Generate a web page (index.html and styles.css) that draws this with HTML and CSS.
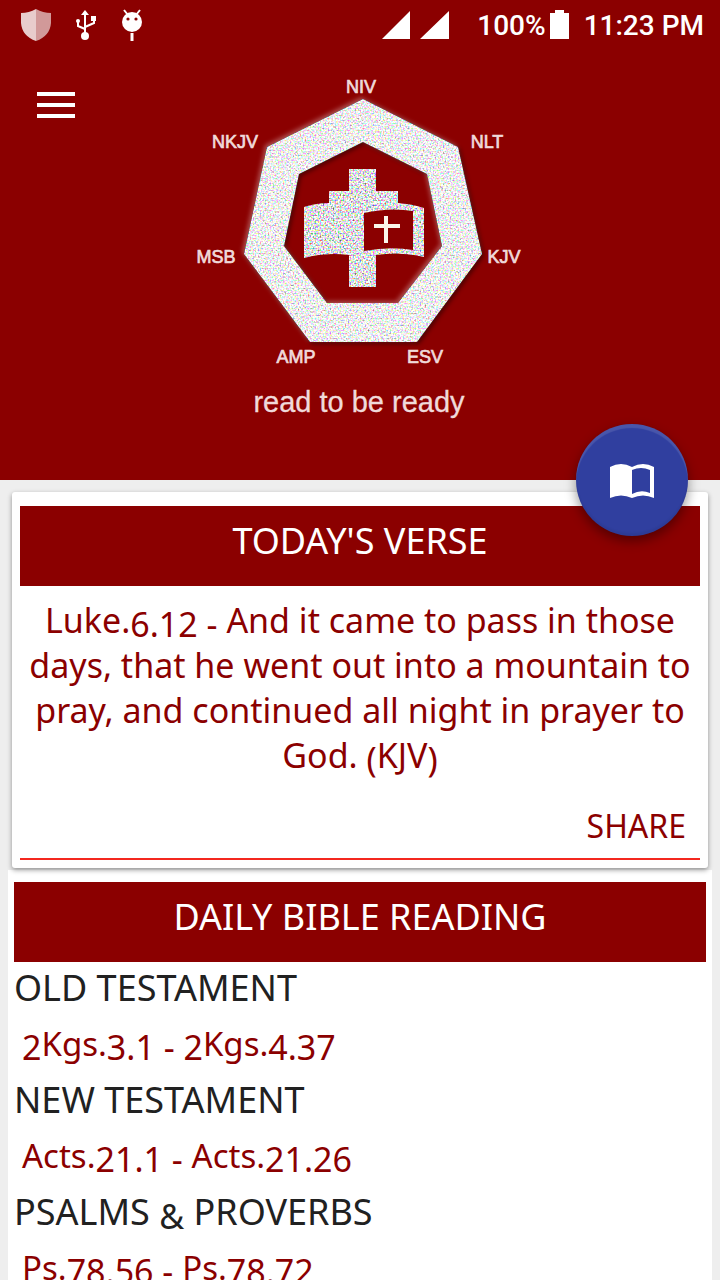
FILE: index.html
```html
<!DOCTYPE html>
<html lang="en">
<head>
  <meta charset="UTF-8">
  <title>Read to be Ready</title>
  <meta name="viewport" content="width=device-width, initial-scale=1.0">
  <link rel="stylesheet" href="styles.css">
</head>
<body>
<div class="screen">

  <header>
    <div class="status">
      <div class="status-left">
        <svg width="30" height="32" viewBox="0 0 30 32">
          <path d="M15 0Q8 4 0 4V14Q1 27 15 32Z" fill="#e8cccc"/>
          <path d="M15 0Q22 4 30 4V14Q29 27 15 32Z" fill="#d19999"/>
        </svg>
        <svg width="20" height="32" viewBox="0 0 20 32" fill="none" stroke="#fff" stroke-width="2">
          <path d="M9 4V26M9 20L2 17V11M9 18L18 14V9"/>
          <path d="M9 1L13 6H5Z" fill="#fff" stroke="none"/>
          <circle cx="9" cy="27" r="4" fill="#fff" stroke="none"/>
          <circle cx="2" cy="12" r="2" fill="#fff" stroke="none"/>
          <path d="M15 7H20V12H15Z" fill="#fff" stroke="none"/>
        </svg>
        <svg width="22" height="32" viewBox="0 0 22 32">
          <path d="M3 1L7 6M19 1L15 6" stroke="#fff" stroke-width="2"/>
          <path d="M11 24V32" stroke="#fff" stroke-width="3"/>
          <circle cx="11" cy="13" r="10" fill="#fff"/>
          <circle cx="7" cy="10" r="1.6" fill="#8b0000"/>
          <circle cx="15" cy="10" r="1.6" fill="#8b0000"/>
        </svg>
      </div>
      <div class="status-right">
        <svg width="68" height="30" viewBox="0 0 68 30" fill="#fff">
          <path d="M0 29H28V1ZM38 29H67V1Z"/>
        </svg>
        <span class="battery">100%
          <svg width="19" height="30" viewBox="0 0 19 30" fill="#fff">
            <path d="M5 0H14V3H19V29H0V3H5Z"/>
          </svg>
        </span>
        <span>11:23 PM</span>
      </div>
    </div>

    <div class="hero">
      <button class="menu" aria-label="Menu"><span></span><span></span><span></span></button>
      <svg class="logo" width="340" height="350" viewBox="190 70 340 350" role="img" aria-label="Read to be ready">
        <defs>
          <filter id="grain" x="-10%" y="-10%" width="120%" height="120%" color-interpolation-filters="sRGB">
            <feTurbulence type="fractalNoise" baseFrequency="0.6" numOctaves="1" seed="4" result="noise"/>
            <feColorMatrix in="noise" type="matrix" values="1.6 0 0 0 0.16  0 1.6 0 0 0.16  0 0 1.6 0 0.17  0 0 0 0 1" result="pastel"/>
            <feComposite in="pastel" in2="SourceAlpha" operator="in" result="body"/>
            <feDropShadow in="SourceAlpha" dx="2" dy="2" stdDeviation="2" flood-color="#000" flood-opacity="0.45" result="dark"/>
            <feDropShadow in="SourceAlpha" dx="-2" dy="-2" stdDeviation="2" flood-color="#fff" flood-opacity="0.3" result="light"/>
            <feMerge>
              <feMergeNode in="dark"/>
              <feMergeNode in="light"/>
              <feMergeNode in="body"/>
            </feMerge>
          </filter>
          <filter id="grain-flat" color-interpolation-filters="sRGB">
            <feTurbulence type="fractalNoise" baseFrequency="0.6" numOctaves="1" seed="9" result="noise"/>
            <feColorMatrix in="noise" type="matrix" values="2.2 0 0 0 -0.2  0 2.2 0 0 -0.2  0 0 2.2 0 -0.18  0 0 0 0 1" result="pastel"/>
            <feComposite in="pastel" in2="SourceAlpha" operator="in"/>
          </filter>
        </defs>
        <!-- ring -->
        <path filter="url(#grain)" fill="#fff" fill-rule="evenodd" d="M363 99L458 147L482 254L417 342H310L244 254L267 147ZM363 142L299 174L284 246L327 303H398L442 246L427 174Z"/>
        <!-- cross and open book -->
        <path filter="url(#grain-flat)" fill="#fff" fill-rule="evenodd" d="M349 169H376V191H398V203Q412 204 424 208V257Q400 251 376 255V287H349V255Q326 252 304 258V207Q316 203 329 203V191H349ZM364 213V251Q390 246 413 250V211Q390 207 364 213Z"/>
        <path fill="#fbf6ea" d="M384 216H388V224H400V228H388V243H384V228H374V224H384Z"/>
        <g class="labels">
          <text x="361" y="93">NIV</text>
          <text x="235" y="148">NKJV</text>
          <text x="487" y="148">NLT</text>
          <text x="216" y="263">MSB</text>
          <text x="504" y="263">KJV</text>
          <text x="296" y="363">AMP</text>
          <text x="425" y="363">ESV</text>
        </g>
        <text class="slogan" x="359" y="412">read to be ready</text>
      </svg>
    </div>

    <button class="fab" aria-label="Open bible">
      <svg width="46" height="36" viewBox="0 0 46 36">
        <path fill="#fff" fill-rule="evenodd" d="M1 5Q12 -1 23 5Q34 -1 45 5V36Q34 31 23 36Q12 31 1 36ZM23 8V32Q32 27 41 31V8Q32 4 23 8Z"/>
      </svg>
    </button>
  </header>

  <main>
    <section class="card">
      <h2>TODAY'S VERSE</h2>
      <p class="verse">Luke.<span class="num">6.12 -</span> And it came to pass in those days, that he went out into a mountain to pray, and continued all night in prayer to God. <span class="num">(</span>KJV<span class="num">)</span></p>
      <button class="share">SHARE</button>
    </section>

    <section class="reading">
      <h2>DAILY BIBLE READING</h2>
      <h3>OLD TESTAMENT</h3>
      <a href="#"><span class="num">2</span>Kgs.<span class="num">3.1 - 2</span>Kgs.<span class="num">4.37</span></a>
      <h3>NEW TESTAMENT</h3>
      <a href="#">Acts.<span class="num">21.1 - </span>Acts.<span class="num">21.26</span></a>
      <h3>PSALMS <span class="num">&amp;</span> PROVERBS</h3>
      <a href="#">Ps.<span class="num">78.56 - </span>Ps.<span class="num">78.72</span></a>
    </section>
  </main>

</div>
</body>
</html>
```
FILE: styles.css
```css
* {
  box-sizing: border-box;
}
body {
  margin: 0;
  font-family: 'Noto Sans', sans-serif;
  background: #eee;
  color: #212121;
}
.screen {
  height: 100vh;
  overflow: hidden;
}
button {
  border: none;
  padding: 0;
  background: transparent;
  font-family: inherit;
  cursor: pointer;
}
header {
  position: relative;
  z-index: 1;
  background: #8b0000;
  padding-bottom: 60px;
}
.status {
  display: flex;
  align-items: center;
  justify-content: space-between;
  height: 50px;
  padding: 0 16px 0 21px;
  color: #fff;
  font-family: Roboto, sans-serif;
  font-size: 28px;
  font-weight: 500;
}
.status svg {
  display: block;
}
.status-left {
  display: flex;
  gap: 25px;
}
.status-right {
  display: flex;
  align-items: center;
  gap: 15px;
}
.status-right > svg {
  margin-right: 12px;
}
.battery {
  display: flex;
  align-items: center;
  gap: 4px;
}
.hero {
  display: grid;
  grid-template-columns: 1fr auto 1fr;
  align-items: start;
  padding-top: 20px;
}
.menu {
  display: flex;
  flex-direction: column;
  gap: 7px;
  width: 38px;
  margin: 22px 0 0 37px;
}
.menu span {
  height: 4px;
  background: #fff;
}
.logo {
  display: block;
}
.labels text,
.slogan {
  font-family: 'Liberation Sans', sans-serif;
  font-size: 18px;
  fill: #f0dada;
  stroke: #f0dada;
  stroke-width: 0.7;
  text-anchor: middle;
}
.slogan {
  font-size: 29px;
  stroke-width: 0.3;
}
.fab {
  position: absolute;
  right: 32px;
  bottom: -56px;
  display: flex;
  align-items: center;
  justify-content: center;
  width: 112px;
  height: 112px;
  border-radius: 50%;
  background: #303f9f;
  box-shadow: 0 5px 12px rgba(0,0,0,0.4), inset 0 4px 1px rgba(255,255,255,0.12), inset 0 -3px 2px rgba(0,0,0,0.06);
}
.card {
  position: relative;
  margin: 12px 12px 0;
  padding: 14px 8px 8px;
  background: #fff;
  border-radius: 3px;
  box-shadow: 0 2px 5px rgba(0,0,0,0.4);
}
h2 {
  height: 80px;
  margin: 0;
  background: #8b0000;
  color: #fff;
  font-size: 36px;
  font-weight: 400;
  line-height: 70px;
  text-align: center;
}
.verse {
  margin: 12px 0 0;
  color: #8b0000;
  font-size: 34px;
  line-height: 45px;
  text-align: center;
}
/* digits and symbols hang below the letters */
.num {
  font-size: 34px;
  line-height: 0;
  vertical-align: -4px;
}
.share {
  display: block;
  width: 100%;
  height: 82px;
  padding: 14px 14px 0 0;
  border-bottom: 2px solid #f4281f;
  color: #8b0000;
  font-size: 32px;
  text-align: right;
}
.reading {
  margin: 2px 8px 0;
  padding: 12px 6px;
  background: #fff;
}
h3 {
  margin: 0;
  font-size: 36px;
  font-weight: 400;
  line-height: 52px;
}
.reading a {
  display: block;
  padding-left: 8px;
  color: #8b0000;
  font-size: 33px;
  line-height: 60px;
  text-decoration: none;
}
```
